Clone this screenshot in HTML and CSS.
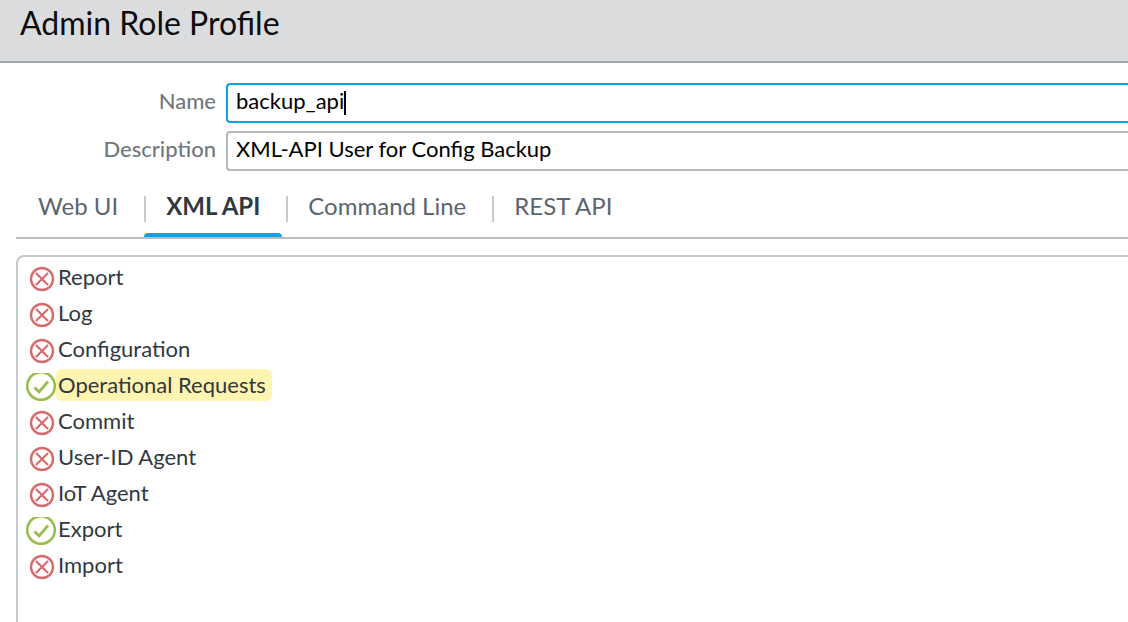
FILE: index.html
```html
<!DOCTYPE html>
<html lang="en">
<head>
  <meta charset="UTF-8" />
  <meta name="viewport" content="width=device-width, initial-scale=1.0"/>
  <title>Admin Role Profile</title>
  <link rel="stylesheet" href="styles.css">
</head>
<body>

  <svg class="sprite" aria-hidden="true">
    <symbol id="deny" viewBox="0 0 32 28">
      <circle cx="16" cy="14" r="11" fill="none" stroke="#d66b6b" stroke-width="2.4"/>
      <path d="M10 8l12 12M22 8l-12 12" fill="none" stroke="#d66b6b" stroke-width="2.2"/>
    </symbol>
    <symbol id="allow" viewBox="0 0 32 28">
      <circle cx="15" cy="13" r="13.8" fill="none" stroke="#98bd48" stroke-width="2.5"/>
      <path d="M8.5 14.5l4.5 4.5L22 8.5" fill="none" stroke="#98bd48" stroke-width="2.8"/>
    </symbol>
  </svg>

  <header class="header">
    <h1>Admin Role Profile</h1>
  </header>

  <main>
    <form class="form">
      <div class="input-group">
        <label for="name">Name</label>
        <div class="field focused">
          <input type="text" id="name" value="backup_api" />
          <span class="caret"></span>
        </div>
      </div>
      <div class="input-group">
        <label for="description">Description</label>
        <div class="field">
          <input type="text" id="description" value="XML-API User for Config Backup" />
        </div>
      </div>
    </form>

    <div class="tabs" role="tablist">
      <button type="button" class="tab" role="tab">Web UI</button>
      <button type="button" class="tab active" role="tab" aria-selected="true">XML API</button>
      <button type="button" class="tab" role="tab">Command Line</button>
      <button type="button" class="tab" role="tab">REST API</button>
    </div>

    <ul class="permissions">
      <li><button type="button"><svg class="icon"><use href="#deny"/></svg><span>Report</span></button></li>
      <li><button type="button"><svg class="icon"><use href="#deny"/></svg><span>Log</span></button></li>
      <li><button type="button"><svg class="icon"><use href="#deny"/></svg><span>Configuration</span></button></li>
      <li><button type="button"><svg class="icon"><use href="#allow"/></svg><span class="highlight">Operational Requests</span></button></li>
      <li><button type="button"><svg class="icon"><use href="#deny"/></svg><span>Commit</span></button></li>
      <li><button type="button"><svg class="icon"><use href="#deny"/></svg><span>User-ID Agent</span></button></li>
      <li><button type="button"><svg class="icon"><use href="#deny"/></svg><span>IoT Agent</span></button></li>
      <li><button type="button"><svg class="icon"><use href="#allow"/></svg><span>Export</span></button></li>
      <li><button type="button"><svg class="icon"><use href="#deny"/></svg><span>Import</span></button></li>
    </ul>
  </main>

</body>
</html>
```
FILE: styles.css
```css
* {
  box-sizing: border-box;
}
body {
  display: flex;
  flex-direction: column;
  min-height: 100vh;
  margin: 0;
  font-family: Lato, sans-serif;
  font-size: 22px;
  color: #303940;
  background-color: #fff;
}
button, input {
  font: inherit;
  color: inherit;
  background: none;
  border: none;
  padding: 0;
}
button {
  cursor: pointer;
}
.sprite {
  display: none;
}
.header {
  padding: 3px 20px 18px;
  background-color: #dbdcde;
  border-bottom: 2px solid #a2a7ab;
}
.header h1 {
  margin: 0;
  font-size: 32px;
  font-weight: normal;
  line-height: 40px;
  color: #0b0c0d;
}
main {
  display: flex;
  flex-direction: column;
  flex: 1;
}
.form {
  display: flex;
  flex-direction: column;
  gap: 8px;
  padding-top: 20px;
}
.input-group {
  display: flex;
  gap: 10px;
}
.input-group label {
  width: 216px;
  text-align: right;
  font-family: "Lato Medium", Lato, sans-serif;
  font-weight: 500;
  line-height: 36px;
  color: #70787f;
}
.field {
  display: flex;
  flex: 1;
  height: 40px;
  padding: 0 8px;
  border: 2px solid #b5b9bd;
  border-right: none;
  border-radius: 4px 0 0 4px;
}
.field input {
  flex: 1;
  height: 30px;
  color: #000;
  outline: none;
}
.field.focused {
  border-color: #0fa3e6;
}
.field.focused input {
  flex: none;
  field-sizing: content;
}
.caret {
  width: 2px;
  height: 24px;
  margin-top: 6px;
  background-color: #000;
}
.tabs {
  display: flex;
  gap: 4px;
  margin-left: 16px;
  border-bottom: 2px solid #babcbe;
}
.tab {
  position: relative;
  display: flex;
  padding: 19px 22px 15px 0;
  font-size: 24px;
  line-height: 32px;
  color: #5b656e;
}
.tab::before {
  content: "";
  width: 2px;
  height: 26px;
  margin: 6px 20px 0 0;
  background-color: #c5cacd;
}
.tab:first-child::before {
  background-color: transparent;
}
.tab.active {
  font-weight: bold;
  color: #303940;
}
.tab.active::after {
  content: "";
  position: absolute;
  left: 0;
  right: 0;
  bottom: 0;
  height: 4px;
  border-radius: 4px 4px 0 0;
  background-color: #0fa3e6;
}
.permissions {
  flex: 1;
  margin: 16px 0 0 16px;
  padding: 2px 8px;
  list-style: none;
  border: 2px solid #c5cacd;
  border-right: none;
  border-bottom: none;
  border-radius: 8px 0 0 0;
}
.permissions button {
  display: flex;
  align-items: center;
  height: 36px;
}
.permissions span {
  line-height: 32px;
}
.icon {
  width: 32px;
  height: 28px;
  margin-top: 4px;
}
.permissions .highlight {
  margin-left: -2px;
  padding: 0 6px 0 2px;
  border-radius: 6px;
  background-color: #fff4b0;
}
```
